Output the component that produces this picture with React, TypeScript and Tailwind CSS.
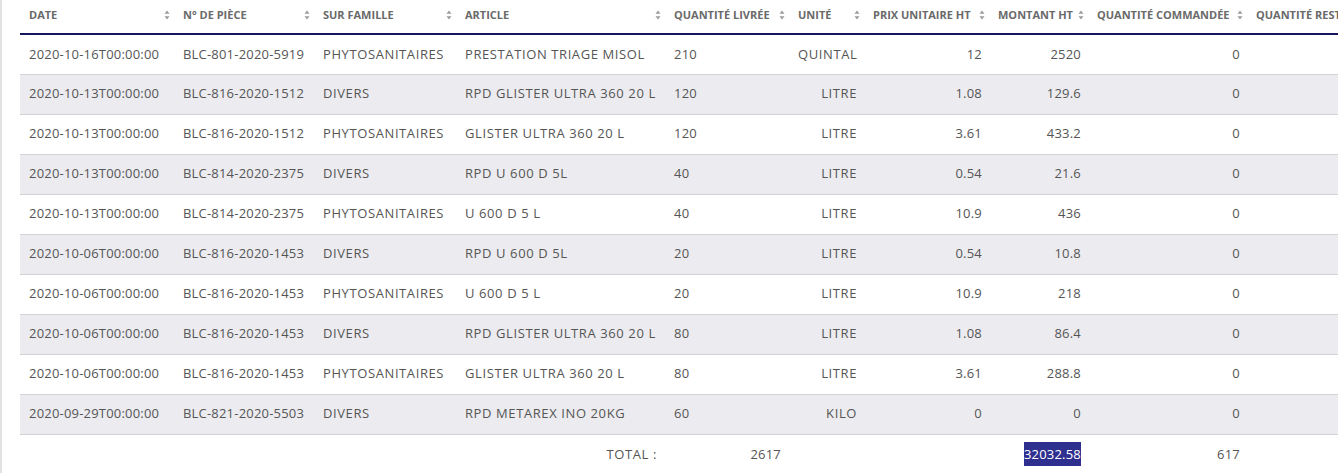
import React from "react";

type Row = {
  date: string;
  piece: string;
  famille: string;
  article: string;
  qte: number;
  unite: string;
  prix: number;
  montant: number;
  cmd: number;
};

const rows: Row[] = [
  { date: "2020-10-16T00:00:00", piece: "BLC-801-2020-5919", famille: "PHYTOSANITAIRES", article: "PRESTATION TRIAGE MISOL", qte: 210, unite: "QUINTAL", prix: 12, montant: 2520, cmd: 0 },
  { date: "2020-10-13T00:00:00", piece: "BLC-816-2020-1512", famille: "DIVERS", article: "RPD GLISTER ULTRA 360 20 L", qte: 120, unite: "LITRE", prix: 1.08, montant: 129.6, cmd: 0 },
  { date: "2020-10-13T00:00:00", piece: "BLC-816-2020-1512", famille: "PHYTOSANITAIRES", article: "GLISTER ULTRA 360 20 L", qte: 120, unite: "LITRE", prix: 3.61, montant: 433.2, cmd: 0 },
  { date: "2020-10-13T00:00:00", piece: "BLC-814-2020-2375", famille: "DIVERS", article: "RPD U 600 D 5L", qte: 40, unite: "LITRE", prix: 0.54, montant: 21.6, cmd: 0 },
  { date: "2020-10-13T00:00:00", piece: "BLC-814-2020-2375", famille: "PHYTOSANITAIRES", article: "U 600 D 5 L", qte: 40, unite: "LITRE", prix: 10.9, montant: 436, cmd: 0 },
  { date: "2020-10-06T00:00:00", piece: "BLC-816-2020-1453", famille: "DIVERS", article: "RPD U 600 D 5L", qte: 20, unite: "LITRE", prix: 0.54, montant: 10.8, cmd: 0 },
  { date: "2020-10-06T00:00:00", piece: "BLC-816-2020-1453", famille: "PHYTOSANITAIRES", article: "U 600 D 5 L", qte: 20, unite: "LITRE", prix: 10.9, montant: 218, cmd: 0 },
  { date: "2020-10-06T00:00:00", piece: "BLC-816-2020-1453", famille: "DIVERS", article: "RPD GLISTER ULTRA 360 20 L", qte: 80, unite: "LITRE", prix: 1.08, montant: 86.4, cmd: 0 },
  { date: "2020-10-06T00:00:00", piece: "BLC-816-2020-1453", famille: "PHYTOSANITAIRES", article: "GLISTER ULTRA 360 20 L", qte: 80, unite: "LITRE", prix: 3.61, montant: 288.8, cmd: 0 },
  { date: "2020-09-29T00:00:00", piece: "BLC-821-2020-5503", famille: "DIVERS", article: "RPD METAREX INO 20KG", qte: 60, unite: "KILO", prix: 0, montant: 0, cmd: 0 },
];

const columns = [
  { label: "DATE", width: "w-[154px]" },
  { label: "N° DE PIÈCE", width: "w-[140px]" },
  { label: "SUR FAMILLE", width: "w-[142px]" },
  { label: "ARTICLE", width: "w-[209px]" },
  { label: "QUANTITÉ LIVRÉE", width: "w-[124px]" },
  { label: "UNITÉ", width: "w-[75px]" },
  { label: "PRIX UNITAIRE HT", width: "w-[125px]" },
  { label: "MONTANT HT", width: "w-[99px]" },
  { label: "QUANTITÉ COMMANDÉE", width: "w-[159px]" },
  { label: "QUANTITÉ RESTANTE", width: "w-[150px]" },
];

const SortIcon = () => (
  <svg width="6" height="10" viewBox="0 0 6 10" className="absolute right-[4px] top-[10px]">
    <path d="M3 0.5 L5.5 3.8 H0.5 Z" fill="#9a9a9a" />
    <path d="M3 9.5 L5.5 6.2 H0.5 Z" fill="#9a9a9a" />
  </svg>
);

const num = "px-[9px] text-[13px] tracking-[0.2px] whitespace-nowrap";
const caps = "px-[9px] text-[13px] tracking-[0.6px] whitespace-nowrap";

const App = () => {
  return (
    <div className="w-[1338px] h-[473px] overflow-hidden bg-white border-l-2 border-[#e2e2e2] pl-[18px] font-['Open_Sans',sans-serif] text-[#555555]">
      <table className="table-fixed border-collapse w-[1377px]">
        <colgroup>
          {columns.map((c) => (
            <col key={c.label} className={c.width} />
          ))}
        </colgroup>
        <thead>
          <tr className="h-[34px] border-b-2 border-[#16165c]">
            {columns.map((c) => (
              <th
                key={c.label}
                className="relative align-top pt-[7px] pl-[9px] pr-[14px] text-left text-[11px] font-bold text-[#6a6a6a] whitespace-nowrap overflow-hidden"
              >
                {c.label}
                <SortIcon />
              </th>
            ))}
          </tr>
        </thead>
        <tbody>
          {rows.map((r, i) => (
            <tr
              key={i}
              className={`h-[40px] border-b border-[#d3d3d6] ${i % 2 === 1 ? "bg-[#ececf0]" : "bg-white"}`}
            >
              <td className={num}>{r.date}</td>
              <td className={num}>{r.piece}</td>
              <td className={caps}>{r.famille}</td>
              <td className={caps}>{r.article}</td>
              <td className={num}>{r.qte}</td>
              <td className={`${caps} pr-[7px] text-right`}>{r.unite}</td>
              <td className={`${num} pr-[7px] text-right`}>{r.prix}</td>
              <td className={`${num} pr-[7px] text-right`}>{r.montant}</td>
              <td className={`${num} pr-[7px] text-right`}>{r.cmd}</td>
              <td className={num}></td>
            </tr>
          ))}
        </tbody>
        <tfoot>
          <tr className="h-[40px]">
            <td></td>
            <td></td>
            <td></td>
            <td className={`${caps} pr-[8px] text-right`}>TOTAL :</td>
            <td className={`${num} pr-[8px] text-right`}>2617</td>
            <td></td>
            <td></td>
            <td className={`${num} pr-[7px] text-right`}>
              <span className="bg-[#2f2f8f] text-white py-[3px]">32032.58</span>
            </td>
            <td className={`${num} pr-[7px] text-right`}>617</td>
            <td></td>
          </tr>
        </tfoot>
      </table>
    </div>
  );
};

export default App;
